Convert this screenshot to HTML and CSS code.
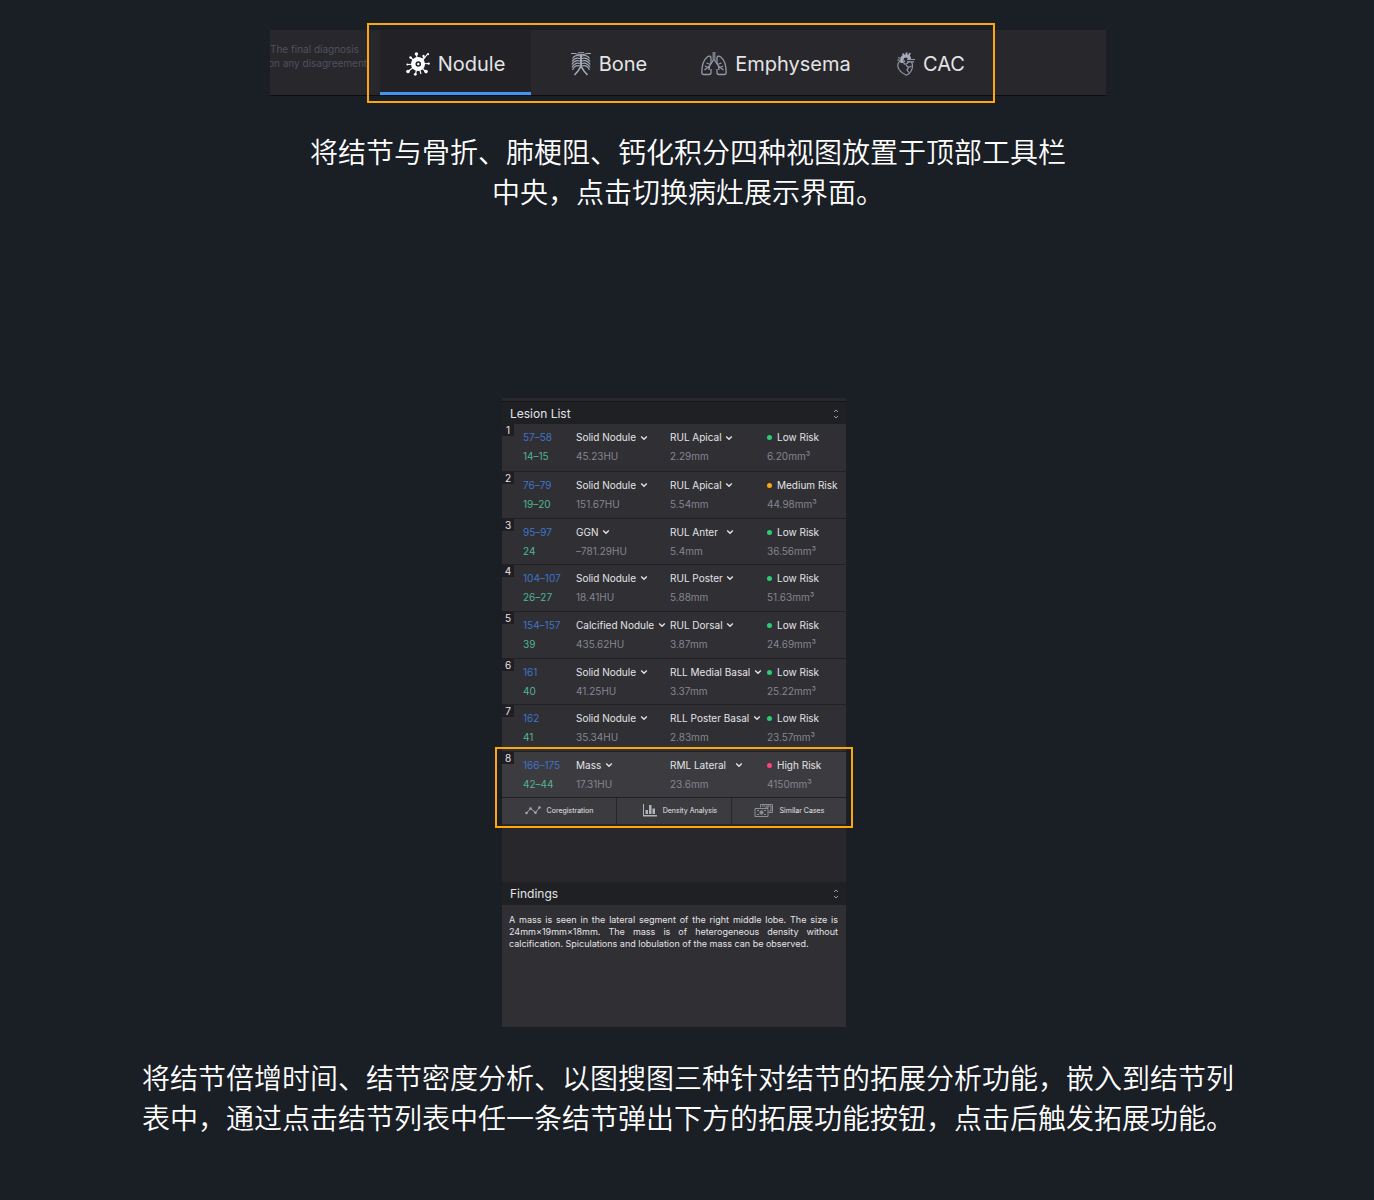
FILE: index.html
```html
<!DOCTYPE html>
<html lang="zh-CN">
<head>
<meta charset="utf-8">
<meta name="viewport" content="width=device-width, initial-scale=1">
<title>Lesion List</title>
<link rel="stylesheet" href="styles.css">
</head>
<body>
<svg class="defs" width="0" height="0" aria-hidden="true">
  <symbol id="chevron" viewBox="0 0 8 8"><path d="M1.2 2.6 4 5.2 6.8 2.6" fill="none" stroke="currentColor" stroke-width="1.4"/></symbol>
  <symbol id="sort" viewBox="0 0 6 10"><path d="M1 3 3 1l2 2M1 7l2 2 2-2" fill="none" stroke="currentColor" stroke-width="1"/></symbol>
</svg>
<main class="page">
  <header class="toolbar">
    <p class="note">The final diagnosis<br><span class="note-cut">on any disagreement</span></p>
    <nav class="tabs">
      <button class="tab tab-active" type="button">
        <svg width="24" height="24" viewBox="0 0 24 24" aria-hidden="true">
          <g stroke="#fff" stroke-width="1.1" fill="none"><path d="M12 12 10.400 2M12 12 18.500 4.500M17 8l4.500-6M12 12l11-.5M12 12l7.500 7.500M12 12 9.500 22M12 12 2.500 19M12 12 1.500 12.500M12 12 4.500 5.500M12 12l3 10"/></g>
          <g fill="#fff"><circle cx="10.400" cy="2" r="1.700"/><circle cx="17.500" cy="4" r="1.200"/><circle cx="22" cy="2.200" r="1.100"/><circle cx="22.600" cy="11.600" r="1.200"/><circle cx="20" cy="19.600" r="1.800"/><circle cx="9.300" cy="22.300" r="1.400"/><circle cx="2" cy="19.500" r="1.800"/><circle cx="1.400" cy="12.500" r="1"/><circle cx="4.500" cy="5.500" r="1.200"/></g>
          <circle cx="12" cy="12" r="7" fill="#fff"/><circle cx="12.300" cy="12" r="2" fill="#fff" stroke="#222125" stroke-width="1.600"/>
        </svg>
        Nodule</button>
      <button class="tab" type="button">
        <svg width="20" height="24" viewBox="0 0 20 24" fill="none" stroke="#a3a9b8" stroke-width="1.100" aria-hidden="true">
          <path d="M10 2v14" stroke-width="2"/><path d="M0 1.500h4l4 1.200h4l4-1.200h4M7 .8h6"/>
          <path d="M9 4C6 3 3 4 1.500 6.500M9 6.500C6 5.500 3 6.500 1 9.500M9 9C6 8 3 9 .8 12.500M9 11.500C6 10.500 3 12 1 15.500M9 14c-3-1-6 .5-7.500 4"/>
          <path d="M11 4c3-1 6 0 7.500 2.500M11 6.500c3-1 6 0 8 3M11 9c3-1 6 0 8.200 3.500M11 11.500c3-1 6 .5 8 4M11 14c3-1 6 .5 7.500 4"/>
          <path d="m9.500 15-2.500 4-3.500 4M10.500 15l2.500 4 3.500 4" stroke-width="1.500"/>
        </svg>
        Bone</button>
      <button class="tab" type="button">
        <svg width="26" height="24" viewBox="0 0 26 24" fill="none" stroke="#9298a8" stroke-width="1.300" aria-hidden="true">
          <path d="M10 12V6c0-2-2-2.500-3.500-1.200C3 7.500.8 13 .8 20.500c0 1.500.5 2 2 2H8c1.500 0 2-.7 2-2V17M16 12V6c0-2 2-2.500 3.500-1.200C23 7.500 25.200 13 25.200 20.500c0 1.500-.5 2-2 2H18c-1.500 0-2-.7-2-2V17"/>
          <path d="M13 0v8.500" stroke-width="3" stroke="#747987"/>
          <path d="m12.500 8-4 6-5 4M8.500 14 8 18M9.500 12.500 5.500 11M6.500 15.500 4 14M13.500 8l4 6 5 4M17.500 14l.5 4M16.500 12.500l4-1.500M19.500 15.500 22 14"/>
        </svg>
        Emphysema</button>
      <button class="tab" type="button">
        <svg width="18" height="24" viewBox="0 0 18 24" fill="none" stroke="#9298a8" stroke-width="1.200" aria-hidden="true">
          <path d="M4 9C1.200 9.500.5 12.500 1 15c.7 4 5 6.500 8.500 8.200C13 22 15.500 17.500 15.500 14c0-1.500-.5-3-1-4"/>
          <path d="M5 11V7.500C5 5 6.500 4 9 4c2.500 0 3.500 1.500 3.500 3.500" stroke-width="3.200" stroke="#a5abba"/>
          <path d="M7 4.500 6 1.500M9.500 4V.5M11.500 4.500l1.500-3.500" stroke-width="1.900" stroke="#a5abba"/>
          <path d="M10 7.500h8M10 9.800h7M1 5.500l3 1M.5 7.800l3.500.7"/>
          <path d="M8 8.500c-2 1.500-1.500 4 1 3.500s1.500-3 3.500-2.500"/>
          <path d="m9 13 2.500 2.500L10 18l2 2.500M11.500 15.500l3-1.500"/>
        </svg>
        CAC</button>
    </nav>
  </header>

  <p class="caption caption-top">将结节与骨折、肺梗阻、钙化积分四种视图放置于顶部工具栏中央，点击切换病灶展示界面。</p>

  <section class="panel">
    <div class="strip"></div>
    <h2 class="bar">Lesion List <svg width="6" height="10" aria-hidden="true"><use href="#sort"/></svg></h2>
    <table class="lesions">
      <colgroup><col class="c-index"><col class="c-slices"><col class="c-type"><col class="c-place"><col class="c-risk"></colgroup>
      <tbody>
        <tr>
          <th scope="row"><span class="index">1</span></th>
          <td><div class="blue">57–58</div><div class="green">14–15</div></td>
          <td><label class="pick"><select aria-label="Type 1"><option>Solid Nodule</option></select><svg width="8" height="8"><use href="#chevron"/></svg></label><div class="value">45.23HU</div></td>
          <td><label class="pick"><select aria-label="Location 1"><option>RUL Apical</option></select><svg width="8" height="8"><use href="#chevron"/></svg></label><div class="value">2.29mm</div></td>
          <td><div class="risk low">Low Risk</div><div class="value">6.20mm³</div></td>
        </tr>
        <tr>
          <th scope="row"><span class="index">2</span></th>
          <td><div class="blue">76–79</div><div class="green">19–20</div></td>
          <td><label class="pick"><select aria-label="Type 2"><option>Solid Nodule</option></select><svg width="8" height="8"><use href="#chevron"/></svg></label><div class="value">151.67HU</div></td>
          <td><label class="pick"><select aria-label="Location 2"><option>RUL Apical</option></select><svg width="8" height="8"><use href="#chevron"/></svg></label><div class="value">5.54mm</div></td>
          <td><div class="risk medium">Medium Risk</div><div class="value">44.98mm³</div></td>
        </tr>
        <tr>
          <th scope="row"><span class="index">3</span></th>
          <td><div class="blue">95–97</div><div class="green">24</div></td>
          <td><label class="pick"><select aria-label="Type 3"><option>GGN</option></select><svg width="8" height="8"><use href="#chevron"/></svg></label><div class="value">–781.29HU</div></td>
          <td><label class="pick pick-wide"><select aria-label="Location 3"><option>RUL Anter</option></select><svg width="8" height="8"><use href="#chevron"/></svg></label><div class="value">5.4mm</div></td>
          <td><div class="risk low">Low Risk</div><div class="value">36.56mm³</div></td>
        </tr>
        <tr>
          <th scope="row"><span class="index">4</span></th>
          <td><div class="blue">104–107</div><div class="green">26–27</div></td>
          <td><label class="pick"><select aria-label="Type 4"><option>Solid Nodule</option></select><svg width="8" height="8"><use href="#chevron"/></svg></label><div class="value">18.41HU</div></td>
          <td><label class="pick"><select aria-label="Location 4"><option>RUL Poster</option></select><svg width="8" height="8"><use href="#chevron"/></svg></label><div class="value">5.88mm</div></td>
          <td><div class="risk low">Low Risk</div><div class="value">51.63mm³</div></td>
        </tr>
        <tr>
          <th scope="row"><span class="index">5</span></th>
          <td><div class="blue">154–157</div><div class="green">39</div></td>
          <td><label class="pick"><select aria-label="Type 5"><option>Calcified Nodule</option></select><svg width="8" height="8"><use href="#chevron"/></svg></label><div class="value">435.62HU</div></td>
          <td><label class="pick"><select aria-label="Location 5"><option>RUL Dorsal</option></select><svg width="8" height="8"><use href="#chevron"/></svg></label><div class="value">3.87mm</div></td>
          <td><div class="risk low">Low Risk</div><div class="value">24.69mm³</div></td>
        </tr>
        <tr>
          <th scope="row"><span class="index">6</span></th>
          <td><div class="blue">161</div><div class="green">40</div></td>
          <td><label class="pick"><select aria-label="Type 6"><option>Solid Nodule</option></select><svg width="8" height="8"><use href="#chevron"/></svg></label><div class="value">41.25HU</div></td>
          <td><label class="pick"><select aria-label="Location 6"><option>RLL Medial Basal</option></select><svg width="8" height="8"><use href="#chevron"/></svg></label><div class="value">3.37mm</div></td>
          <td><div class="risk low">Low Risk</div><div class="value">25.22mm³</div></td>
        </tr>
        <tr>
          <th scope="row"><span class="index">7</span></th>
          <td><div class="blue">162</div><div class="green">41</div></td>
          <td><label class="pick"><select aria-label="Type 7"><option>Solid Nodule</option></select><svg width="8" height="8"><use href="#chevron"/></svg></label><div class="value">35.34HU</div></td>
          <td><label class="pick"><select aria-label="Location 7"><option>RLL Poster Basal</option></select><svg width="8" height="8"><use href="#chevron"/></svg></label><div class="value">2.83mm</div></td>
          <td><div class="risk low">Low Risk</div><div class="value">23.57mm³</div></td>
        </tr>
      </tbody>
      <tbody class="selected">
        <tr>
          <th scope="row"><span class="index">8</span></th>
          <td><div class="blue">166–175</div><div class="green">42–44</div></td>
          <td><label class="pick"><select aria-label="Type 8"><option>Mass</option></select><svg width="8" height="8"><use href="#chevron"/></svg></label><div class="value">17.31HU</div></td>
          <td><label class="pick pick-wide"><select aria-label="Location 8"><option>RML Lateral</option></select><svg width="8" height="8"><use href="#chevron"/></svg></label><div class="value">23.6mm</div></td>
          <td><div class="risk high">High Risk</div><div class="value">4150mm³</div></td>
        </tr>
        <tr class="action-row">
          <td colspan="5"><div class="actions">
            <button class="action" type="button"><svg width="16" height="9" viewBox="0 0 16 9" fill="none" stroke="#a3a6af" aria-hidden="true"><path d="m1.500 7 4-4.500 5 4 4-5"/><g fill="#a3a6af" stroke="none"><circle cx="1.500" cy="7" r="1.300"/><circle cx="5.500" cy="2.500" r="1.300"/><circle cx="10.500" cy="6.800" r="1.300"/><circle cx="14.500" cy="1.500" r="1.300"/></g></svg>Coregistration</button>
            <button class="action action-density" type="button"><svg width="14" height="13" viewBox="0 0 14 13" fill="#b0b3bc" aria-hidden="true"><path d="M0 0h1v11h13v1.500H0zM2.500 6H5v4H2.500zM6 1h2.500v9H6zM9.500 4.500H12V10H9.500z"/></svg>Density Analysis</button>
            <button class="action" type="button"><svg width="20" height="13" viewBox="0 0 20 13" fill="none" stroke="#8b8e97" aria-hidden="true"><path d="M6.500 3.500v-3h12v8h-4M8 2h3M14 2h3v5h-2" /><path d="M1 4.500h13v8H1z"/><path d="M3 6.500h2M10 6.500h2M3 10.500h2M10 10.500h2"/><circle cx="7.500" cy="8.500" r="1.700" fill="#8b8e97"/><circle cx="13" cy="3" r="1.200"/></svg>Similar Cases</button>
          </div></td>
        </tr>
      </tbody>
    </table>
    <h2 class="bar bar-findings">Findings <svg width="6" height="10" aria-hidden="true"><use href="#sort"/></svg></h2>
    <div class="findings"><p>A mass is seen in the lateral segment of the right middle lobe. The size is 24mm×19mm×18mm. The mass is of heterogeneous density without calcification. Spiculations and lobulation of the mass can be observed.</p></div>
  </section>

  <p class="caption caption-bottom">将结节倍增时间、结节密度分析、以图搜图三种针对结节的拓展分析功能，嵌入到结节列表中，通过点击结节列表中任一条结节弹出下方的拓展功能按钮，点击后触发拓展功能。</p>
</main>
</body>
</html>
```
FILE: styles.css
```css
* { box-sizing: border-box; }

body {
  margin: 0;
  background: #1a1e25;
  color: #e4e4e6;
  font-family: Inter, "Noto Sans CJK SC", sans-serif;
}

p, h2 { margin: 0; font-weight: 400; }

button, select {
  margin: 0;
  padding: 0;
  border: 0;
  background: none;
  color: inherit;
  font: inherit;
}

svg { flex: none; }
.defs { position: absolute; }

.page {
  display: flex;
  flex-direction: column;
  align-items: center;
  padding: 30px 0 60px 2px;
}

/* Top toolbar */
.toolbar {
  display: flex;
  width: 100%;
  max-width: 836px;
  height: 66px;
  background: #28272c;
  border-bottom: 1px solid #0c0d0f;
}

.note {
  flex: none;
  width: 110px;
  padding-top: 12px;
  overflow: hidden;
  color: #50515f;
  font-size: 10px;
  line-height: 14px;
  white-space: nowrap;
}
.note-cut { margin-left: -2px; }

.tabs {
  position: relative;
  display: grid;
  grid-template-columns: 151px 156px 178px 132px;
}
.tabs::after {
  content: "";
  position: absolute;
  inset: -7px 2px -8px -13px;
  border: 2px solid #ffa60a;
  pointer-events: none;
}

.tab {
  display: flex;
  align-items: center;
  justify-content: center;
  gap: 8px;
  padding-top: 6px;
  border-bottom: 3px solid transparent;
  font-size: 20px;
}
.tab-active {
  background: #222125;
  border-bottom-color: #3d97f5;
}

/* Captions */
.caption {
  color: #fff;
  font-family: "Noto Sans CJK SC", sans-serif;
  font-size: 28px;
  font-weight: 350;
  line-height: 40px;
}
.caption-top {
  max-width: 760px;
  margin-top: 35px;
  text-align: center;
}
.caption-bottom {
  max-width: 1092px;
  margin-top: 30px;
}

/* Lesion panel */
.panel {
  width: 344px;
  margin: 187px 28px 0 0;
  background: #28272c;
  font-size: 10px;
}
.strip { height: 4px; border-bottom: 1px solid #141518; }

.bar {
  display: flex;
  align-items: center;
  justify-content: space-between;
  height: 22px;
  padding: 1px 7px 0 8px;
  background: #1f2024;
  font-size: 12px;
}
.bar svg { color: #9a9ba0; }

.lesions {
  width: 100%;
  table-layout: fixed;
  border-collapse: collapse;
  line-height: 13px;
}
.c-index { width: 21px; }
.c-slices { width: 53px; }
.c-type { width: 94px; }
.c-place { width: 97px; }

.lesions tr { height: 47px; background: #302f34; }
.lesions tr:nth-child(3n), .lesions .selected tr { height: 46px; }
.lesions th, .lesions td {
  padding: 0;
  border-bottom: 1px solid #212125;
  font-weight: 400;
  text-align: left;
  vertical-align: top;
  white-space: nowrap;
}
.lesions td { padding-top: 7px; }

.index {
  display: block;
  width: 12px;
  height: 12px;
  background: #1f1f23;
  line-height: 12px;
  text-align: center;
}

.pick { display: flex; align-items: center; gap: 3px; height: 13px; }
.pick-wide { gap: 8px; }
.pick select { appearance: none; line-height: 13px; }

.blue { color: #3f74c8; }
.green { color: #4fb68d; }
.value { color: #84868f; }
.green, .value { margin-top: 6px; }

.risk { display: flex; align-items: center; gap: 5px; }
.risk::before {
  content: "";
  width: 5px;
  height: 5px;
  border-radius: 50%;
  background: currentColor;
}
.low::before { background: #28cf70; }
.medium::before { background: #ffa60a; }
.high::before { background: #ff4080; }

.selected { position: relative; }
.selected::after {
  content: "";
  position: absolute;
  inset: -4px -7px;
  border: 2px solid #ffa60a;
  pointer-events: none;
}
.lesions .selected tr { background: #3c3b40; }

.lesions .selected .action-row { height: 26px; }
.lesions .action-row td { padding: 0; border: 0; }
.actions { display: grid; grid-template-columns: 114px 115px 1fr; }
.action {
  display: flex;
  align-items: center;
  justify-content: center;
  gap: 6px;
  height: 26px;
  font-size: 7px;
}
.action + .action { border-left: 1px solid #27272b; }
.action-density { padding-left: 12px; }

.bar-findings { margin-top: 58px; height: 23px; }
.findings {
  min-height: 122px;
  padding: 9px 8px 0 7px;
  background: #302f34;
  font-size: 9px;
  line-height: 12px;
  text-align: justify;
}
```
